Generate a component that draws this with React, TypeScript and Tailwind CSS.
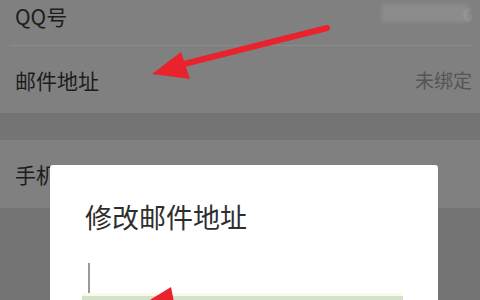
import React from "react";

export default function App() {
  const font = { fontFamily: '"Noto Sans CJK SC", "Noto Sans", sans-serif' };
  return (
    <div className="relative w-[480px] h-[300px] overflow-hidden bg-[#747474]" style={font}>
      <div className="flex flex-col">
        <div className="bg-[#808080]">
          <div className="relative h-[45px] flex items-start pt-[2px] pl-[15px]">
            <span className="text-[21px] leading-[28px] text-[#1c1c1c]">QQ号</span>
            <div className="absolute left-[382px] top-[4px] w-[86px] h-[18px] bg-[#8c8c8c] blur-[2px]" />
            <span className="absolute left-[463px] top-[2px] text-[16px] leading-[24px] text-[#a0a0a0] blur-[1px]">6</span>
          </div>
          <div className="ml-[10px] mr-[8px] h-px bg-[#8b8b8b]" />
          <div className="h-[67px] flex items-center justify-between pl-[15px] pr-[8px]">
            <span className="text-[21px] leading-[28px] text-[#1c1c1c]">邮件地址</span>
            <span className="text-[19px] leading-[26px] text-[#555555]">未绑定</span>
          </div>
        </div>
        <div className="h-[27px] bg-[#747474]" />
        <div className="h-[68px] bg-[#808080] flex items-center pl-[15px]">
          <span className="text-[21px] leading-[28px] text-[#1c1c1c]">手机号</span>
        </div>
      </div>

      <div className="absolute left-[50px] top-[165px] w-[388px] h-[160px] bg-white rounded-[3px]">
        <div className="pl-[35px] pt-[34px] text-[27px] leading-[36px] text-[#2e2e2e]">修改邮件地址</div>
        <div className="absolute left-[38px] top-[98px] w-[2px] h-[30px] bg-[#9a9a9a]" />
        <div className="absolute left-[32px] top-[128px] w-[321px] h-[3px] bg-[#fdf9ea]" />
        <div className="absolute left-[32px] top-[131px] w-[321px] h-[5px] bg-[#d2e2cb]" />
      </div>

      <svg className="absolute inset-0" width="480" height="300" viewBox="0 0 480 300">
        <line x1="327" y1="28" x2="176" y2="66" stroke="#e8232d" strokeWidth="6" strokeLinecap="round" />
        <polygon points="152,74 181,52 190,79" fill="#e8232d" />
        <polygon points="171,287 140,306 176,312" fill="#e8232d" />
      </svg>
    </div>
  );
}
